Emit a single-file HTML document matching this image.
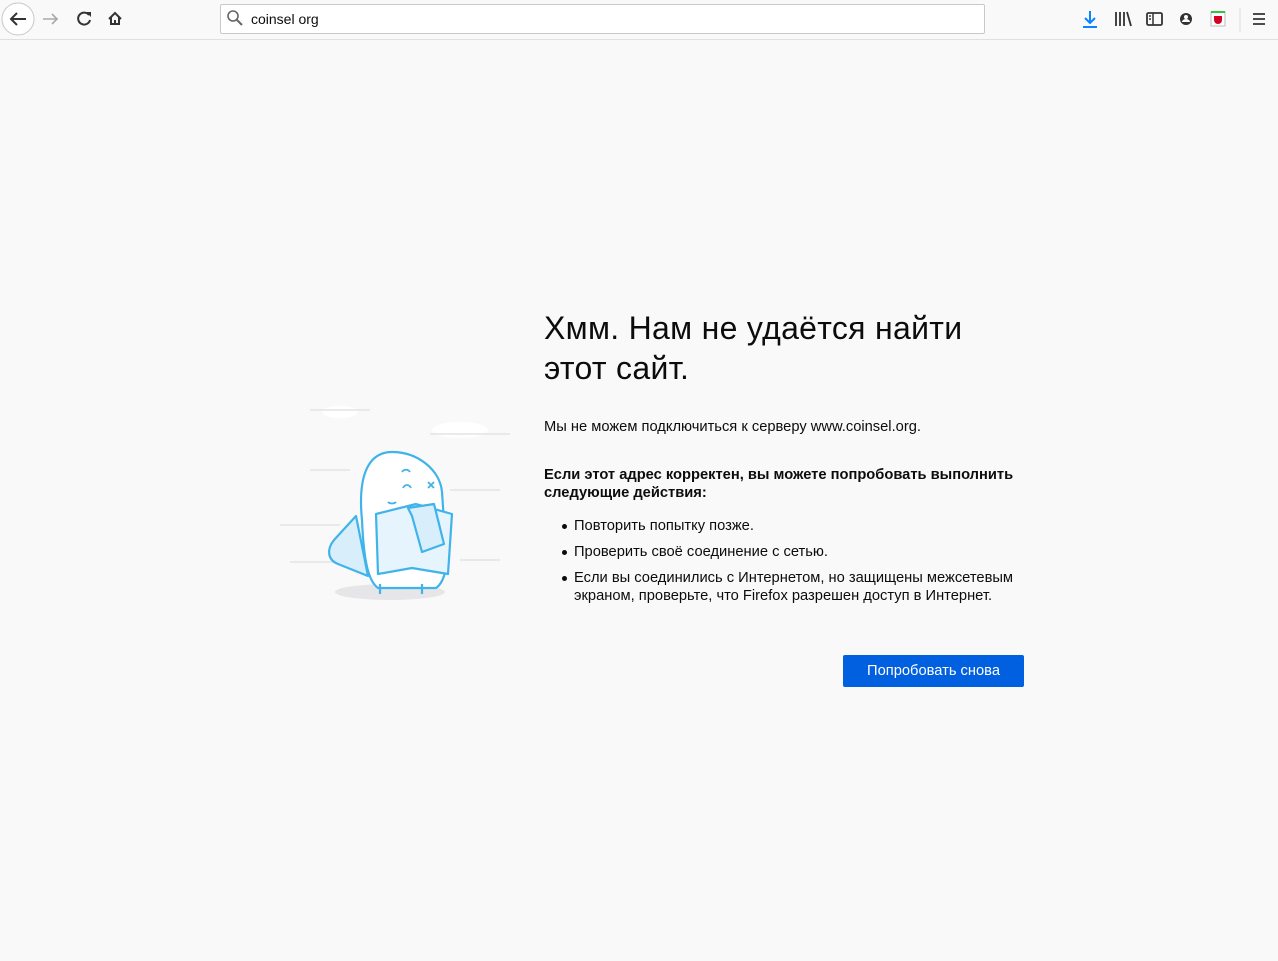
<!DOCTYPE html>
<html><head><meta charset="utf-8"><style>
*{margin:0;padding:0;box-sizing:border-box}
body{width:1278px;height:961px;background:#f9f9fa;font-family:"Liberation Sans",sans-serif;color:#0c0c0d;position:relative;overflow:hidden}
.tb{position:absolute;left:0;top:0;width:1278px;height:40px;background:#f9f9fa;border-bottom:1px solid #e0e0e2}
.url{position:absolute;left:220px;top:4px;width:765px;height:30px;background:#fff;border:1px solid #c8c8ca;border-radius:2px;font-size:14px;line-height:28px;padding-left:30px;color:#0c0c0d}
.ab{position:absolute}
h1{position:absolute;left:544px;top:308px;font-size:32px;font-weight:normal;line-height:40px;color:#0c0c0d;width:445px;letter-spacing:0.3px}
.p{position:absolute;left:544px;font-size:14.7px;line-height:18px;color:#0c0c0d}
ul{position:absolute;left:574px;top:517px;font-size:14.7px;line-height:18px;list-style:none;width:460px}
ul li{position:relative;margin-bottom:8px}
ul li:before{content:"";position:absolute;left:-12px;top:7px;width:5px;height:5px;border-radius:50%;background:#0c0c0d}
.btn{position:absolute;left:843px;top:655px;width:181px;height:32px;background:#0060df;color:#fff;font-size:14.7px;line-height:32px;text-align:center;border-radius:2px}
</style></head><body>
<div class="tb">
<svg class="ab" style="left:0;top:2px" width="140" height="36" viewBox="0 0 140 36">
<circle cx="18" cy="17" r="16" fill="#fff" stroke="#c8c8ca"/>
<path d="M26 17H11M17 11l-6 6 6 6" fill="none" stroke="#333" stroke-width="2"/>
<path d="M58 17H43M52 12l5 5-5 5" fill="none" stroke="#aaa" stroke-width="1.6"/>
<path d="M89 13a6 6 0 1 0 1 5" fill="none" stroke="#333" stroke-width="2"/><path d="M86 10h5v5z" fill="#333"/>
<path d="M109 17l6-6 6 6M111 15v7h8v-7" fill="none" stroke="#333" stroke-width="2"/><rect x="114" y="18" width="2" height="4" fill="#333"/>
</svg>
<div class="url">coinsel org</div>
<svg class="ab" style="left:226px;top:9px" width="20" height="20"><circle cx="7" cy="7" r="5" fill="none" stroke="#666" stroke-width="1.6"/><path d="M11 11l5 5" stroke="#666" stroke-width="2"/></svg>
<svg class="ab" style="left:1078px;top:8px" width="200" height="24" viewBox="0 0 200 24">
<path d="M12 3v12M7 10l5 5 5-5" fill="none" stroke="#0a84ff" stroke-width="2"/><path d="M5 19h14" stroke="#0a84ff" stroke-width="2"/>
<path d="M38 4v14M42 4v14M46 4v14M49 4l4 14" stroke="#333" stroke-width="1.8"/>
<rect x="69" y="5" width="15" height="12" rx="1.5" fill="none" stroke="#333" stroke-width="1.8"/><path d="M75 5v12M71 8h2M71 11h2" stroke="#333" stroke-width="1.5"/>
<circle cx="108" cy="11" r="6" fill="#333"/><circle cx="108" cy="9" r="2" fill="#fff"/><path d="M104 14a4 3 0 0 1 8 0" fill="#fff"/>
<rect x="133" y="4" width="14" height="14" fill="#fff" stroke="#bbb"/><path d="M133 4h14" stroke="#2ac845" stroke-width="2"/><path d="M136 8h8v4a4 4 0 0 1-8 0z" fill="#d70022"/>
<path d="M162 -8v40" stroke="#e0e0e2"/>
<path d="M175 6h12M175 11h12M175 16h12" stroke="#333" stroke-width="1.8"/>
</svg>
</div>
<svg class="ab" style="left:280px;top:390px" width="240" height="220" viewBox="0 0 240 220">
<g fill="#fff"><ellipse cx="60" cy="22" rx="18" ry="6"/><ellipse cx="180" cy="40" rx="28" ry="8"/></g>
<g stroke="#e4e4e6" stroke-width="1.5"><path d="M30 20h60M150 44h80M30 80h40M0 135h60M170 100h50M10 172h50M180 170h40"/></g>
<ellipse cx="110" cy="202" rx="55" ry="8" fill="#e6e6e8"/>
<g fill="#fff" stroke="#3fb3ea" stroke-width="2.2" stroke-linejoin="round">
<path d="M82 130c-4-40 4-68 30-68 26 0 48 18 50 40l4 60c2 20-4 32-10 36h-58c-8-6-14-20-16-68z"/>
<path d="M76 126l-22 24c-8 10-6 20 4 24l30 12z" fill="#d8eefb"/>
<path d="M96 124l40-10 36 10-4 60-36-6-34 6z" fill="#e6f4fd"/>
<path d="M128 118l26-4 10 40-22 8-10-36z" fill="#d8eefb"/>
<path d="M100 194v10M142 194v10"/>
</g>
<g fill="none" stroke="#3fb3ea" stroke-width="1.8"><path d="M122 82c2-3 6-3 8 0M123 98c2-4 6-4 8 0M148 92l6 6M154 92l-6 6M108 112c2 2 6 2 8 0"/></g>
</svg>
<h1>Хмм. Нам не удаётся найти этот сайт.</h1>
<div class="p" style="top:418px">Мы не можем подключиться к серверу www.coinsel.org.</div>
<div class="p" style="top:466px;font-weight:bold;width:490px">Если этот адрес корректен, вы можете попробовать выполнить следующие действия:</div>
<ul>
<li>Повторить попытку позже.</li>
<li>Проверить своё соединение с сетью.</li>
<li>Если вы соединились с Интернетом, но защищены межсетевым экраном, проверьте, что Firefox разрешен доступ в Интернет.</li>
</ul>
<div class="btn">Попробовать снова</div>
</body></html>
